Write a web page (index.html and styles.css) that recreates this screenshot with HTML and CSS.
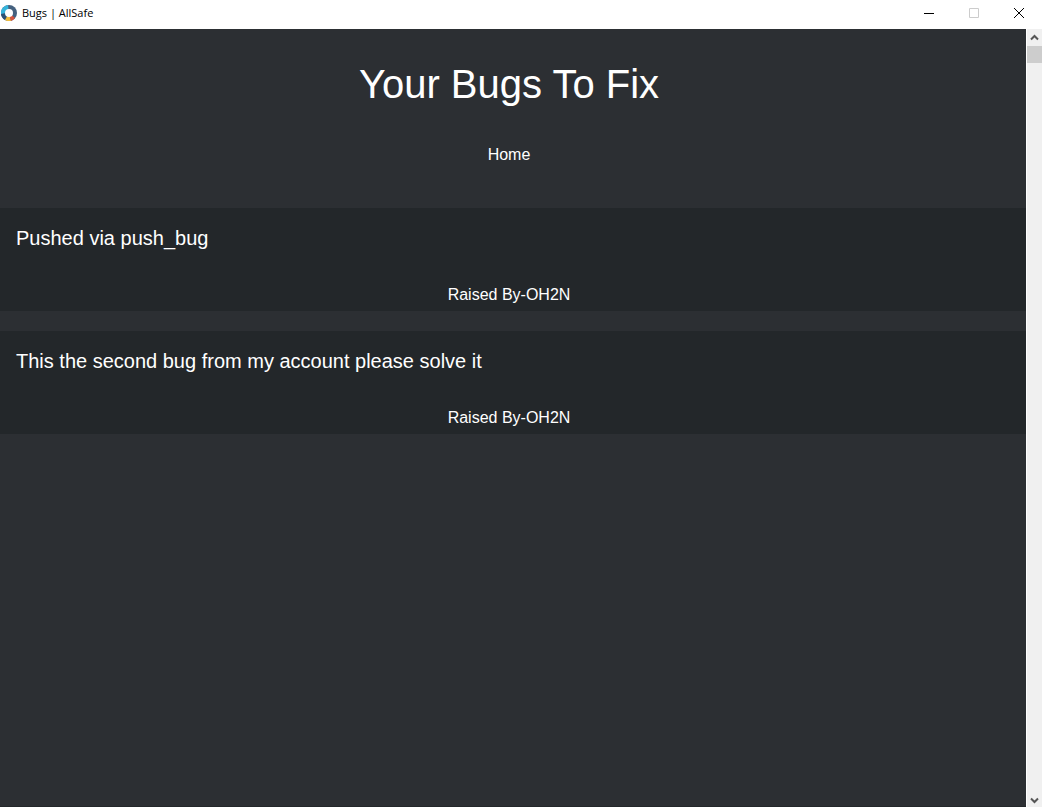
FILE: index.html
```html
<!DOCTYPE html>
<html lang="en">
<head>
<meta charset="utf-8">
<title>Bugs | AllSafe</title>
<link rel="stylesheet" href="styles.css">
</head>
<body>
<div class="window">
  <header class="titlebar">
    <svg class="logo" viewBox="0 0 16 16" aria-hidden="true">
      <circle cx="8" cy="8" r="8" fill="#45617f"/>
      <path d="M8 8 7 0A8 8 0 0 0 0 9Z" fill="#35b5dc"/>
      <path d="M8 8 0 9a8 8 0 0 0 4 6Z" fill="#2b5274"/>
      <path d="M8 8 4 15a8 8 0 0 0 6 1Z" fill="#f0bd3c"/>
      <path d="M8 8 10 16a8 8 0 0 0 4-3Z" fill="#d9533c"/>
      <circle cx="8" cy="8" r="4" fill="#fff"/>
    </svg>
    <span class="caption">Bugs | AllSafe</span>
    <div class="controls">
      <button class="control" type="button" aria-label="Minimize"><svg viewBox="0 0 12 12"><path d="M1 6.500h10"/></svg></button>
      <button class="control" type="button" aria-label="Maximize" disabled><svg viewBox="0 0 12 12"><path d="M1.500 1.500h9v9h-9z"/></svg></button>
      <button class="control" type="button" aria-label="Close"><svg viewBox="0 0 12 12"><path d="m1 1 10 10M11 1 1 11"/></svg></button>
    </div>
  </header>
  <div class="view">
    <main class="content">
      <h1 class="heading">Your Bugs To Fix</h1>
      <nav class="menu"><a class="home" href="#">Home</a></nav>
      <section class="bugs">
        <article class="bug">
          <h2 class="bug-title">Pushed via push_bug</h2>
          <p class="author">Raised By-OH2N</p>
        </article>
        <article class="bug">
          <h2 class="bug-title">This the second bug from my account please solve it</h2>
          <p class="author">Raised By-OH2N</p>
        </article>
      </section>
    </main>
    <div class="scrollbar">
      <button class="arrow" type="button" aria-label="Scroll up"><svg viewBox="0 0 9 7"><path d="M1 5.500 4.500 2 8 5.500"/></svg></button>
      <div class="track"><div class="thumb"></div></div>
      <button class="arrow arrow-down" type="button" aria-label="Scroll down"><svg viewBox="0 0 9 7"><path d="M1 1.500 4.500 5 8 1.500"/></svg></button>
    </div>
  </div>
</div>
</body>
</html>
```
FILE: styles.css
```css
* {
  box-sizing: border-box;
}

body {
  margin: 0;
  font-family: "Liberation Sans", Arial, sans-serif;
  background: #2c2f33;
}

h1, h2, p {
  margin: 0;
  font-weight: 400;
}

button {
  display: flex;
  align-items: center;
  justify-content: center;
  padding: 0;
  border: 0;
  background: transparent;
}

.window {
  display: flex;
  flex-direction: column;
  min-height: 100vh;
}

.titlebar {
  display: flex;
  align-items: center;
  height: 29px;
  padding: 0 1px 3px 1px;
  background: #fff;
}

.logo {
  width: 16px;
  height: 16px;
}

.caption {
  margin-left: 5px;
  font-family: "Open Sans", "Noto Sans", sans-serif;
  font-size: 11px;
  line-height: 16px;
  color: #000;
}

.controls {
  display: flex;
  margin-left: auto;
}

.control {
  width: 45px;
  height: 26px;
}

.control svg {
  width: 12px;
  height: 12px;
  fill: none;
  stroke: #000;
}

.control:disabled svg {
  stroke: #ccc;
}

.view {
  display: flex;
  flex: 1;
}

.content {
  flex: 1;
  border-bottom: 1px solid #23272a;
  color: #fff;
}

.heading {
  padding: 32px 8px 0 0;
  font-size: 40px;
  line-height: 46px;
  text-align: center;
}

.menu {
  padding: 38px 8px 44px 0;
  font-size: 16px;
  line-height: 19px;
  text-align: center;
}

.home {
  color: #fff;
  text-decoration: none;
}

.bugs {
  display: grid;
  gap: 20px;
}

.bug {
  padding: 18px 8px 7px 0;
  background: #23272a;
}

.bug-title {
  padding-left: 16px;
  font-size: 20px;
  line-height: 24px;
}

.author {
  padding-top: 35px;
  font-size: 16px;
  line-height: 19px;
  text-align: center;
}

.scrollbar {
  display: flex;
  flex-direction: column;
  width: 16px;
  border-left: 1px solid #fff;
  background: #f0f0f0;
}

.arrow {
  height: 17px;
}

.arrow-down {
  height: 13px;
}

.arrow svg {
  width: 9px;
  height: 7px;
  fill: none;
  stroke: #555;
  stroke-width: 2;
}

.track {
  flex: 1;
}

.thumb {
  height: 17px;
  background: #cdcdcd;
}
```
